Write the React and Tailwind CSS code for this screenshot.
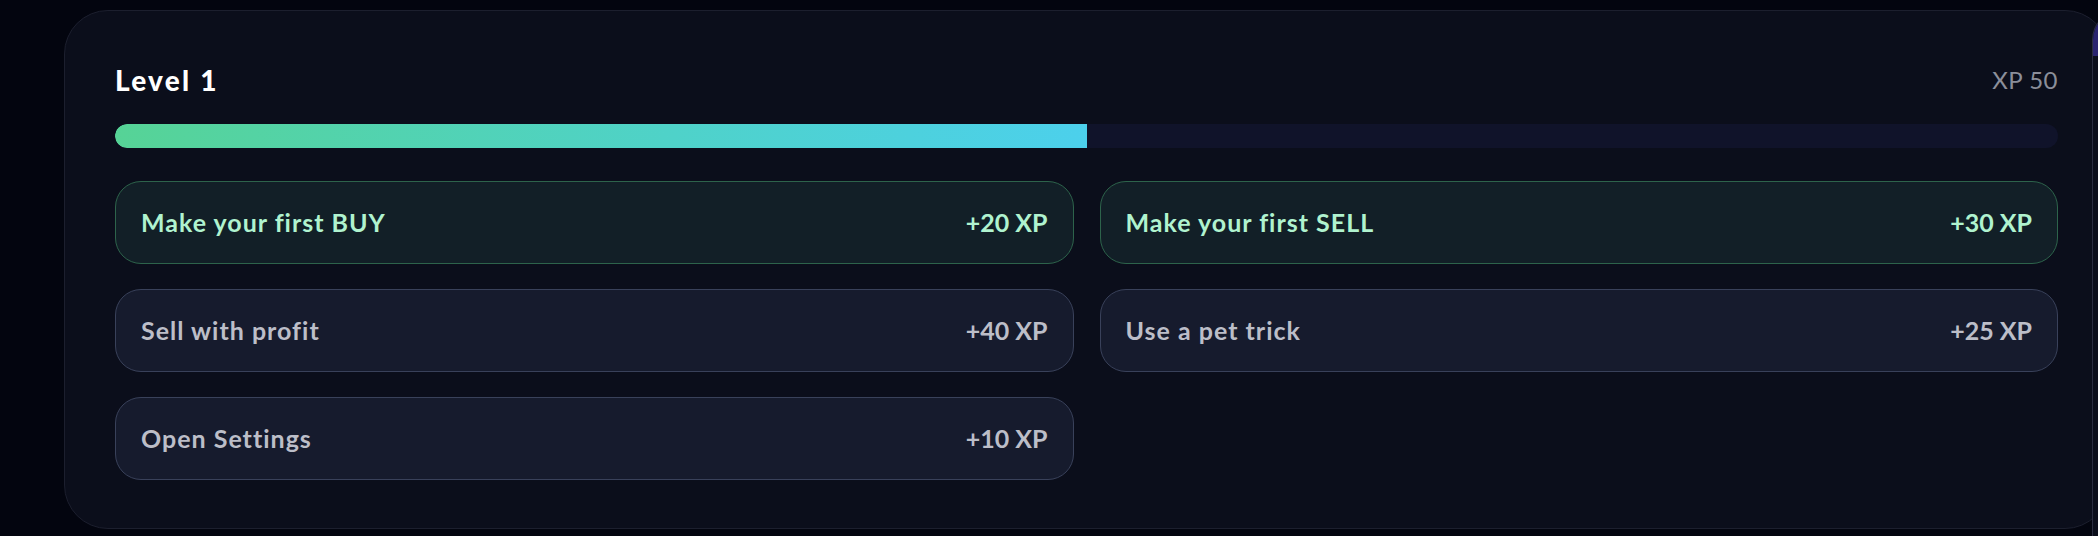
import React from "react";

const tasks = [
  { label: "Make your first BUY", xp: 20, done: true },
  { label: "Make your first SELL", xp: 30, done: true },
  { label: "Sell with profit", xp: 40, done: false },
  { label: "Use a pet trick", xp: 25, done: false },
  { label: "Open Settings", xp: 10, done: false },
];

function TaskRow({ label, xp, done }) {
  return (
    <div
      className={
        done
          ? "flex h-[83px] items-center justify-between rounded-[26px] border border-[#2d634b] bg-[#121f27] px-[25px] text-[#b0f3cf]"
          : "flex h-[83px] items-center justify-between rounded-[26px] border border-[#39415a] bg-[#161b2d] px-[25px] text-[#bcbec8]"
      }
    >
      <span className="text-[25px] font-bold tracking-[0.04em]">{label}</span>
      <span className="text-[25px] font-bold">+{xp} XP</span>
    </div>
  );
}

export default function App() {
  const xp = 50;
  const pct = Math.min(100, xp);

  return (
    <div
      className="relative h-[536px] overflow-hidden bg-[#03050f] pl-[64px] pt-[10px]"
      style={{ fontFamily: "Lato, 'Noto Sans', sans-serif" }}
    >
      <div className="h-[519px] w-[2045px] rounded-[44px] border border-[#1c1f2e] bg-[#0b0e1b] px-[50px] pt-[51px]">
        <div className="flex items-center justify-between">
          <h2 className="text-[28px] font-black leading-[34px] tracking-[0.08em] text-white">Level 1</h2>
          <span className="text-[24px] tracking-[0.02em] text-[#8b8e9a]">XP {xp}</span>
        </div>

        <div className="mt-[26px] h-[24px] w-full overflow-hidden rounded-full bg-[#10132a]">
          <div
            className="h-full rounded-l-full bg-gradient-to-r from-[#56d396] to-[#4cd0ec]"
            style={{ width: `${pct}%` }}
          />
        </div>

        <div className="mt-[33px] grid grid-cols-2 gap-x-[26px] gap-y-[25px]">
          {tasks.map((t) => (
            <TaskRow key={t.label} {...t} />
          ))}
        </div>
      </div>

      {/* neighbouring panel peeking in at the right edge */}
      <div className="absolute left-[2092px] top-[10px] h-[540px] w-[60px] overflow-hidden rounded-tl-[30px] border-l border-t border-[#2a2d40] bg-[#0b0e1b]">
        <div className="h-[45px] bg-[#2a2470]" />
      </div>
    </div>
  );
}
